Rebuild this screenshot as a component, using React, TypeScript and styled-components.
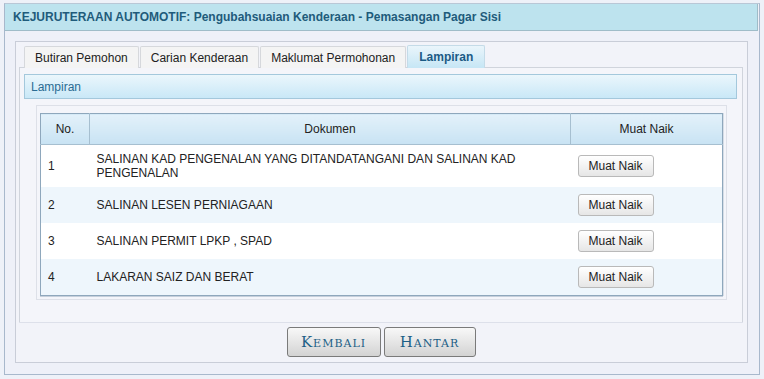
import styled, { createGlobalStyle } from 'styled-components';

const GlobalStyle = createGlobalStyle`
  html, body {
    margin: 0;
    padding: 0;
    background: #eef1f8;
  }
  body {
    font-family: "Liberation Sans", Arial, sans-serif;
    font-size: 12px;
    color: #222222;
  }
`;

const Frame = styled.div`
  margin: 3px 4px 0 4px;
  height: 372px;
  box-sizing: border-box;
  border: 1px solid #a8b8cc;
  border-top-color: #b9c7d6;
  background: #eef0f8;
  display: flex;
  flex-direction: column;
`;

const TitleBar = styled.div`
  height: 27px;
  box-sizing: border-box;
  padding: 0 8px;
  display: flex;
  align-items: center;
  background: #bde3ee;
  border-bottom: 1px solid #9fbcc8;
  border-right: 1px solid #9fbcc8;
  margin-right: 1px;
  font-weight: bold;
  font-size: 12px;
  color: #1f5b7b;
`;

const Body = styled.div`
  flex: 1;
  padding: 10px 11px 11px 10px;
  display: flex;
`;

// Main panel holding the tabs and the footer buttons
const Panel = styled.div`
  flex: 1;
  box-sizing: border-box;
  border: 1px solid #c9cdd8;
  background: #f2f3f9;
  padding: 3px 4px 0 3px;
  display: flex;
  flex-direction: column;
`;

const TabRow = styled.div`
  display: flex;
  padding-left: 5px;
  height: 23px;
  position: relative;
  z-index: 1;
`;

const Tab = styled.div<{ $active?: boolean }>`
  box-sizing: border-box;
  height: ${(p) => (p.$active ? '23px' : '22px')};
  margin-top: ${(p) => (p.$active ? '0' : '1px')};
  padding: 0 ${(p) => (p.$active ? '11px' : '10px')};
  display: flex;
  align-items: center;
  margin-right: 1px;
  border: 1px solid ${(p) => (p.$active ? '#c4dbe8' : '#d6d8dc')};
  border-bottom: none;
  border-radius: 2px 2px 0 0;
  background: ${(p) =>
    p.$active
      ? 'linear-gradient(#eaf5fb, #c6e6f5)'
      : '#f4f4f4'};
  color: ${(p) => (p.$active ? '#1b5a85' : '#222222')};
  font-weight: ${(p) => (p.$active ? 'bold' : 'normal')};
  font-size: 12px;
`;

const TabContent = styled.div`
  box-sizing: border-box;
  height: 255px;
  margin-top: -1px;
  border: 1px solid #d0d4dc;
  border-bottom: none;
  background: #f4f5fa;
  padding: 6px 5px 0 4px;
`;

const SectionBar = styled.div`
  height: 25px;
  box-sizing: border-box;
  border: 1px solid #a4c8dc;
  background: linear-gradient(#ebf6fc, #c9e8f7);
  color: #2a6c93;
  font-size: 12px;
  padding: 0 6px;
  display: flex;
  align-items: center;
`;

const Fieldset = styled.div`
  margin: 6px 10px 0 12px;
  border: 1px solid #dde0e8;
  padding: 7px 3px 3px 3px;
`;

const Table = styled.table`
  width: 100%;
  border-collapse: collapse;
  border: 1px solid #8ea7bc;
  box-shadow: 0 1px 0 #c5cfdb, 1px 0 0 #d6dde6;
  font-size: 12px;
`;

const Th = styled.th<{ $width?: number }>`
  width: ${(p) => (p.$width ? `${p.$width}px` : 'auto')};
  height: 31px;
  box-sizing: border-box;
  font-weight: normal;
  text-align: center;
  color: #222222;
  background: linear-gradient(#e3f1fa, #c8e3f3);
  border-left: 1px solid #a6bfd0;
  border-bottom: 1px solid #a6bfd0;
  padding: 0 6px;
  &:first-child {
    border-left: none;
  }
`;

const Tr = styled.tr<{ $alt?: boolean }>`
  background: ${(p) => (p.$alt ? '#eef6fc' : '#ffffff')};
`;

const Td = styled.td<{ $tall?: boolean }>`
  height: ${(p) => (p.$tall ? '42px' : '36px')};
  padding: 0 7px;
  line-height: 14px;
  vertical-align: middle;
  color: #222222;
`;

const DocCell = styled(Td)`
  padding-right: 20px;
`;

const SmallButton = styled.button`
  width: 76px;
  height: 22px;
  font-family: "Liberation Sans", Arial, sans-serif;
  font-size: 12px;
  color: #222222;
  border: 1px solid #b9b9b9;
  border-radius: 3px;
  background: linear-gradient(#ffffff, #e6e6e6);
  padding: 0;
  cursor: pointer;
`;

const Footer = styled.div`
  flex: 1;
  border-top: 1px solid #dde0ea;
  display: flex;
  justify-content: center;
  align-items: flex-start;
  gap: 3px;
  padding-top: 4px;
`;

const BigButton = styled.button<{ $width: number }>`
  width: ${(p) => p.$width}px;
  height: 30px;
  border: 1px solid #7a7a7a;
  border-radius: 3px;
  background: linear-gradient(#f8f8f8, #d3d3d3);
  font-family: "DejaVu Serif", "Liberation Serif", serif;
  font-variant: small-caps;
  font-size: 15px;
  letter-spacing: 1px;
  color: #1c5f86;
  padding: 0;
  cursor: pointer;
`;

const tabs = ['Butiran Pemohon', 'Carian Kenderaan', 'Maklumat Permohonan', 'Lampiran'];

const documents = [
  'SALINAN KAD PENGENALAN YANG DITANDATANGANI DAN SALINAN KAD PENGENALAN',
  'SALINAN LESEN PERNIAGAAN',
  'SALINAN PERMIT LPKP , SPAD',
  'LAKARAN SAIZ DAN BERAT',
];

export default function App() {
  return (
    <>
      <GlobalStyle />
      <Frame>
        <TitleBar>KEJURUTERAAN AUTOMOTIF: Pengubahsuaian Kenderaan - Pemasangan Pagar Sisi</TitleBar>
        <Body>
          <Panel>
            <TabRow>
              {tabs.map((t) => (
                <Tab key={t} $active={t === 'Lampiran'}>
                  {t}
                </Tab>
              ))}
            </TabRow>
            <TabContent>
              <SectionBar>Lampiran</SectionBar>
              <Fieldset>
                <Table>
                  <thead>
                    <tr>
                      <Th $width={49}>No.</Th>
                      <Th>Dokumen</Th>
                      <Th $width={152}>Muat Naik</Th>
                    </tr>
                  </thead>
                  <tbody>
                    {documents.map((doc, i) => (
                      <Tr key={doc} $alt={i % 2 === 1}>
                        <Td $tall={i === 0}>{i + 1}</Td>
                        <DocCell $tall={i === 0}>{doc}</DocCell>
                        <Td $tall={i === 0}>
                          <SmallButton>Muat Naik</SmallButton>
                        </Td>
                      </Tr>
                    ))}
                  </tbody>
                </Table>
              </Fieldset>
            </TabContent>
            <Footer>
              <BigButton $width={94}>Kembali</BigButton>
              <BigButton $width={92}>Hantar</BigButton>
            </Footer>
          </Panel>
        </Body>
      </Frame>
    </>
  );
}
